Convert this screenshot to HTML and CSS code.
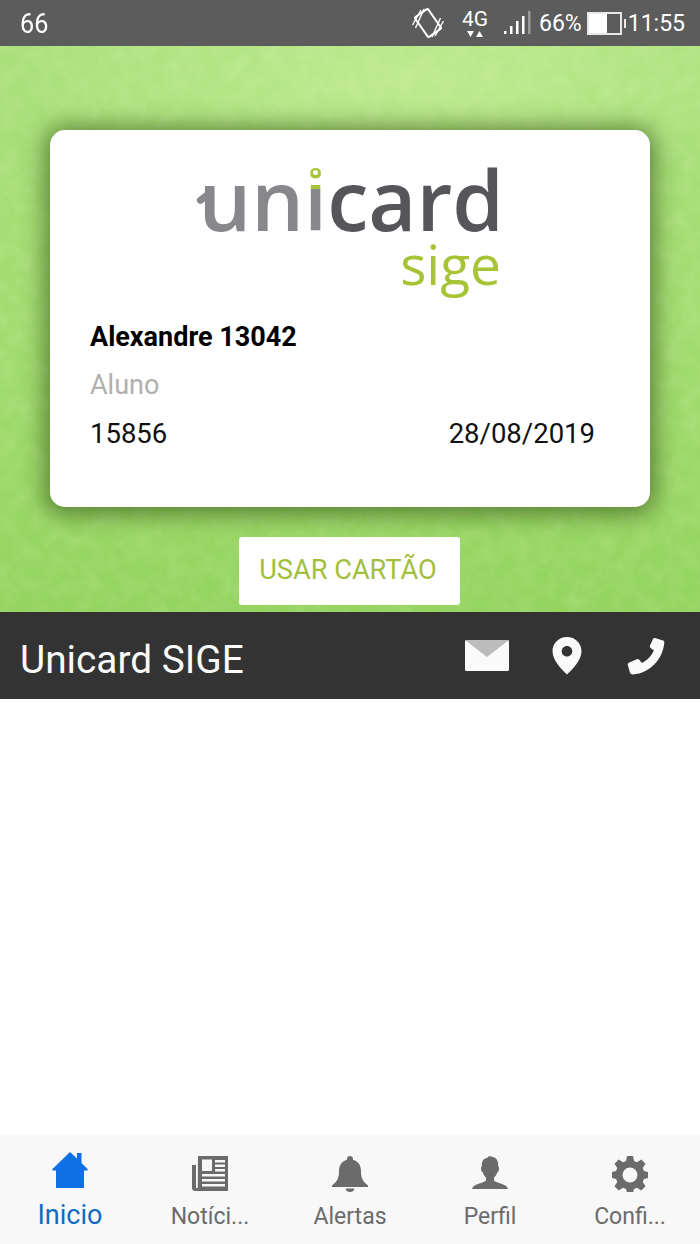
FILE: index.html
```html
<!DOCTYPE html>
<html lang="pt">
<head>
  <meta charset="UTF-8">
  <meta name="viewport" content="width=device-width, initial-scale=1.0">
  <title>Unicard SIGE</title>
  <link rel="stylesheet" href="styles.css">
</head>
<body>

  <!-- Status bar -->
  <div class="status-bar">
    <span class="status-left">66</span>
    <div class="status-right">
      <svg class="icon-rotate" width="34" height="32" viewBox="0 0 34 32" fill="none" stroke="#fff" stroke-width="2">
        <rect x="9" y="4" width="16" height="24" rx="1.5" transform="rotate(-35 17 16)"/>
        <path d="M1.500 18 L10 3 M4.500 21 L13 2 M32.500 14 L24 29 M29.500 11 L21 30" stroke-width="1.400"/>
      </svg>
      <div class="net">
        <span class="net-label">4G</span>
        <svg width="18" height="8" viewBox="0 0 18 8" fill="#fff"><path d="M1 1h7L4.500 7zM10 7h7l-3.500-6z"/></svg>
      </div>
      <svg class="icon-signal" width="27" height="26" viewBox="0 0 27 26" fill="#fff">
        <rect x="0" y="21" width="2.500" height="3"/>
        <rect x="6" y="16" width="2.500" height="8"/>
        <rect x="12" y="11" width="2.500" height="13"/>
        <rect x="18" y="6" width="2.500" height="18"/>
        <rect x="24" y="1" width="2.500" height="23" fill="#9a9a9a"/>
      </svg>
      <span class="status-text">66%</span>
      <div class="battery"><div class="battery-fill"></div></div>
      <span class="status-text clock">11:55</span>
    </div>
  </div>

  <!-- Card area -->
  <div class="hero">
    <svg class="hero-texture" width="700" height="566">
      <filter id="paper">
        <feTurbulence type="fractalNoise" baseFrequency="0.06" numOctaves="4" seed="7"/>
        <feColorMatrix values="0 0 0 0 1  0 0 0 0 1  0 0 0 0 0.8  0.9 0 0 0 -0.3"/>
      </filter>
      <rect width="700" height="566" filter="url(#paper)" opacity="0.25"/>
    </svg>
    <div class="card">
      <div class="logo">
        <div class="logo-main"><span class="logo-uni">un<span class="logo-i">i</span></span><span class="logo-card">card</span></div>
        <div class="logo-sub">sige</div>
      </div>
      <div class="card-name">Alexandre 13042</div>
      <div class="card-role">Aluno</div>
      <div class="card-row">
        <span>15856</span>
        <span>28/08/2019</span>
      </div>
    </div>
    <button class="use-btn">USAR CARTÃO</button>
  </div>

  <!-- Title bar -->
  <div class="title-bar">
    <span class="title">Unicard SIGE</span>
    <div class="title-icons">
      <svg width="44" height="32" viewBox="0 0 44 32">
        <rect width="44" height="31" rx="1.500" fill="#fafafa"/>
        <path d="M0 0h44L22 17z" fill="#bcbcbc"/>
      </svg>
      <svg width="30" height="38" viewBox="0 0 30 38">
        <path fill-rule="evenodd" fill="#fafafa" d="M15 0C6.700 0 0.500 6.300 0.500 14.300 0.500 23 9 32 15 37.500 21 32 29.500 23 29.500 14.300 29.500 6.300 23.300 0 15 0zM15 9c3 0 5.300 2.400 5.300 5.200S18 19.500 15 19.500 9.700 17 9.700 14.200 12 9 15 9z"/>
      </svg>
      <svg class="icon-phone" width="38" height="38" viewBox="0 0 38 38">
        <path fill="#fafafa" d="M28 1l8 2.500c1 .4 1.400 1.200 1.300 2.200C36 22 23 36 6 37.500c-1.500.1-2.500-.5-3-1.700L.8 28c-.2-1 .2-1.700 1-2.200l8-3.500c1-.4 1.700-.2 2.400.5l2.700 3.300c5-2.500 9.500-7 12-12.500l-3.300-2.600c-.8-.7-1-1.500-.6-2.400L26 2c.4-.8 1.100-1.200 2-1z"/>
      </svg>
    </div>
  </div>

  <div class="content"></div>

  <!-- Bottom tabs -->
  <div class="tabs">
    <div class="tab active">
      <svg width="36" height="36" viewBox="0 0 36 36">
        <path fill="#0f6fe6" d="M18 0L25 6.500V1h4.500v10L36 17.500l-.8 1H32V36H4V18.500H.8L0 17.500z"/>
      </svg>
      <span>Inicio</span>
    </div>
    <div class="tab">
      <svg width="36" height="36" viewBox="0 0 36 36">
        <path fill="#6b6b6b" fill-rule="evenodd" d="M6 0h30v35H3c-2 0-3-1.500-3-3V9h4v22.500c0 1 1.800 1 1.800 0zM10 3.500V15h10V3.500zM23 4v2.500h10V4zM23 8.500V11h10V8.500zM23 13v2.500h10V13zM10 18v2.500h23V18zM10 23v2.500h23V23zM10 28v2.500h23V28z"/>
      </svg>
      <span>Notíci...</span>
    </div>
    <div class="tab">
      <svg width="36" height="36" viewBox="0 0 36 36">
        <path fill="#6b6b6b" d="M18 0c1.800 0 3 1.200 3 3v.8c5.500 1.500 8 6 8 11.200 0 6 1 10 7 14.500V31H0v-1.500c6-4.500 7-8.500 7-14.500 0-5.200 2.500-9.700 8-11.200V3c0-1.800 1.200-3 3-3zM13.500 32.500h9C22 35 20.300 36 18 36s-4-1-4.500-3.500z"/>
      </svg>
      <span>Alertas</span>
    </div>
    <div class="tab">
      <svg width="36" height="36" viewBox="0 0 36 36">
        <path fill="#6b6b6b" d="M17 0c2 .8 5 .5 7 2.500 2 2 2.500 5 2.200 8 1 .3 1 2 .6 3.500-.3 1.300-.8 2-1.500 2.200-.6 2.300-1.700 4-3.300 5.300v3c1 1.500 8 3 12 5.500 1 .7 1.700 2 2 3H0c.3-1 1-2.300 2-3 4-2.500 11-4 12-5.500v-3c-1.600-1.300-2.700-3-3.300-5.300-.7-.2-1.200-.9-1.500-2.200-.4-1.500-.4-3.200.6-3.500-.2-3 .3-5.500 2.200-7.500C13.500 2 16 2 17 0z"/>
      </svg>
      <span>Perfil</span>
    </div>
    <div class="tab">
      <svg width="36" height="36" viewBox="0 0 36 36">
        <path fill="#6b6b6b" fill-rule="evenodd" d="M15 0h6l1 5 3 1.300 4.300-2.800 4.200 4.200L30.700 12l1.300 3 4 1v6l-4 .9-1.300 3.100 2.800 4.300-4.200 4.200-4.300-2.800-3 1.300-1 4h-6l-1-4-3-1.300-4.300 2.800-4.200-4.200L5.300 26 4 22.900 0 22v-6l4-1 1.300-3-2.800-4.300 4.200-4.200L11 6.300 14 5zM18 11.500a7.500 7.500 0 1 0 0 15 7.500 7.500 0 0 0 0-15z"/>
      </svg>
      <span>Confi...</span>
    </div>
  </div>

</body>
</html>
```

FILE: styles.css
```css
/* Basic Styling */
* {
  box-sizing: border-box;
}

body {
  margin: 0;
  width: 700px;
  height: 1244px;
  display: flex;
  flex-direction: column;
  overflow: hidden;
  background-color: #fff;
  font-family: 'Roboto', sans-serif;
}

/* Status bar */
.status-bar {
  height: 46px;
  flex: none;
  display: flex;
  align-items: center;
  justify-content: space-between;
  padding: 0 15px 0 20px;
  background-color: #5c5c5c;
  color: #fff;
}

.status-left {
  font-size: 28px;
  transform: scaleX(0.9);
  transform-origin: left;
}

.status-right {
  display: flex;
  align-items: center;
}

.icon-rotate {
  margin-right: 15px;
}

.net {
  display: flex;
  flex-direction: column;
  align-items: center;
  width: 30px;
  margin-right: 14px;
}

.net-label {
  font-size: 21px;
  line-height: 21px;
}

.icon-signal {
  margin-right: 8px;
}

.status-text {
  font-size: 23px;
}

.battery {
  width: 35px;
  height: 23px;
  margin: 0 6px 0 5px;
  border: 2px solid #e8e8e8;
  position: relative;
}

.battery::after {
  content: "";
  position: absolute;
  right: -6px;
  top: 5px;
  width: 2px;
  height: 9px;
  background-color: #e8e8e8;
}

.battery-fill {
  width: 60%;
  height: 100%;
  background-color: #fff;
}

/* Card area */
.hero {
  height: 566px;
  flex: none;
  position: relative;
  overflow: hidden;
  padding: 84px 50px 0;
  display: flex;
  flex-direction: column;
  align-items: center;
  background-color: #a3dc72;
  background-image:
    radial-gradient(ellipse 420px 120px at 420px 30px, #bdea8f, rgba(189, 234, 143, 0)),
    linear-gradient(180deg, #a9e07a 0%, #a2dc70 50%, #94d45f 100%);
}

.hero-texture {
  position: absolute;
  top: 0;
  left: 0;
}

.card {
  position: relative;
  width: 600px;
  height: 377px;
  flex: none;
  padding: 0 55px 0 40px;
  border-radius: 15px;
  background-color: #fff;
  box-shadow: 0 2px 22px 6px rgba(50, 80, 20, 0.62);
}

/* Logo */
.logo {
  height: 180px;
  width: 414px;
  padding-top: 25px;
  display: flex;
  flex-direction: column;
  align-items: flex-end;
  font-family: 'Open Sans', sans-serif;
}

.logo-main {
  font-size: 83px;
  font-weight: 600;
  line-height: 88px;
  white-space: nowrap;
}

.logo-uni {
  position: relative;
  color: #87878c;
}

/* little flick on the u of the logo */
.logo-uni::before {
  content: "";
  position: absolute;
  left: -3px;
  top: 52px;
  width: 16px;
  height: 7px;
  border-radius: 4px;
  background-color: #87878c;
  transform: rotate(-38deg);
}

.logo-i {
  position: relative;
  color: transparent;
  background: linear-gradient(#a6c436 0 42%, #87878c 42%);
  -webkit-background-clip: text;
  background-clip: text;
}

/* the dot of the i is a ring */
.logo-i::after {
  content: "";
  position: absolute;
  left: 50%;
  top: 28px;
  width: 5px;
  height: 5px;
  margin-left: -2.500px;
  border-radius: 50%;
  background-color: #fff;
}

.logo-card {
  color: #55555a;
}

.logo-sub {
  font-size: 55px;
  font-weight: 500;
  line-height: 42px;
  margin-right: 3px;
  color: #a6c436;
}

/* Card text */
.card-name {
  font-size: 27px;
  font-weight: 700;
  line-height: 30px;
  margin-top: 12px;
  color: #000;
}

.card-role {
  font-size: 27px;
  line-height: 30px;
  margin-top: 18px;
  color: #b0b0b0;
}

.card-row {
  display: flex;
  justify-content: space-between;
  font-size: 27.500px;
  line-height: 30px;
  margin-top: 19px;
  color: #111;
}

/* Button */
.use-btn {
  position: relative;
  width: 221px;
  height: 68px;
  flex: none;
  margin: 30px 1px 0 0;
  padding: 0 3px 3px 0;
  border: 0;
  border-radius: 3px;
  background-color: #fff;
  color: #a2bf3c;
  font-family: inherit;
  font-size: 27.200px;
}

/* Title bar */
.title-bar {
  height: 87px;
  flex: none;
  display: flex;
  align-items: center;
  justify-content: space-between;
  padding: 0 35px 0 20px;
  background-color: #333;
}

.title {
  font-size: 38.800px;
  margin-top: 8px;
  color: #fafafa;
}

.title-icons {
  display: flex;
  align-items: center;
  gap: 43px;
}

.icon-phone {
  margin-left: 2px;
}

.content {
  flex: 1;
  background-color: #fff;
}

/* Bottom tabs */
.tabs {
  height: 109px;
  flex: none;
  display: grid;
  grid-template-columns: repeat(5, 140px);
  background-color: #f8f8f8;
}

.tab {
  display: flex;
  flex-direction: column;
  align-items: center;
  padding-top: 21px;
  color: #6b6b6b;
  font-size: 23px;
}

.tab span {
  margin-top: 11px;
}

.tab.active {
  padding-top: 17px;
  color: #0f6cc4;
  font-size: 27px;
}

.tab.active span {
  margin-top: 11px;
}
```
